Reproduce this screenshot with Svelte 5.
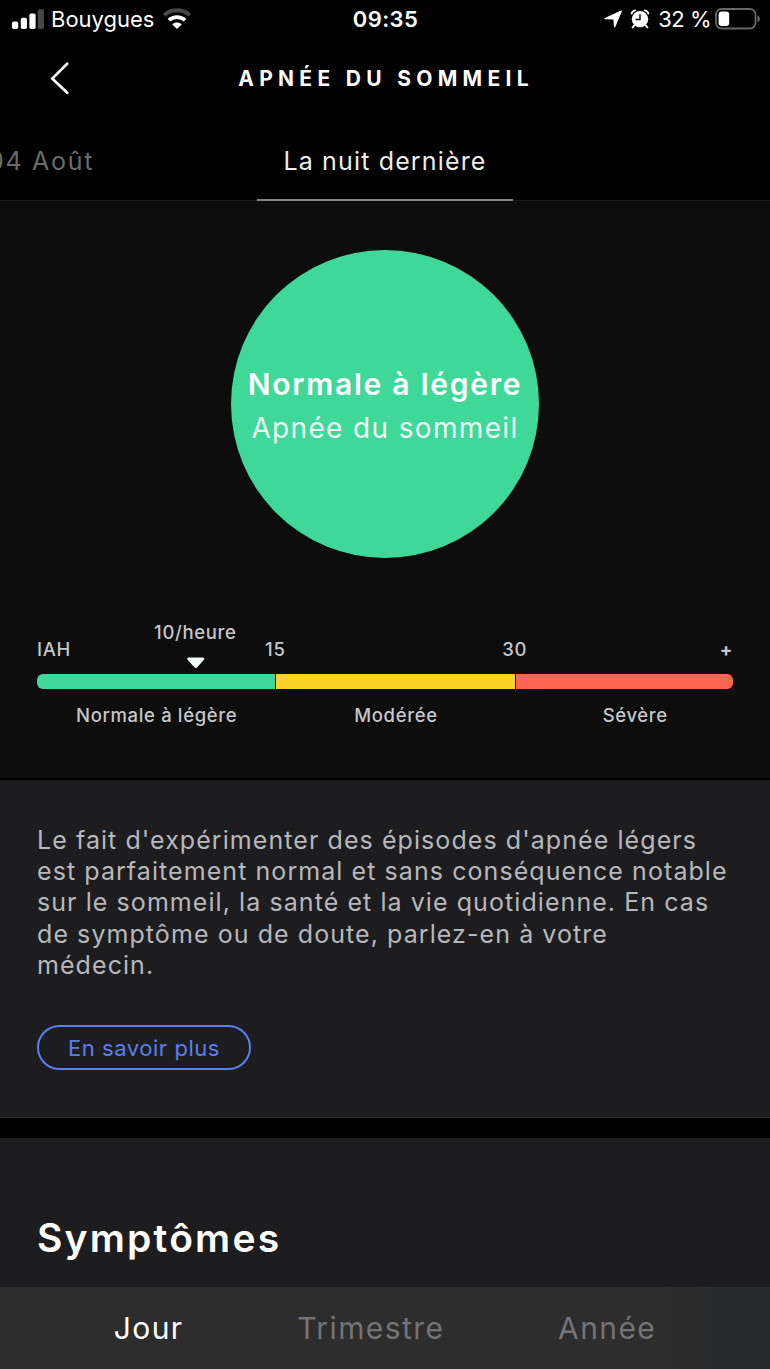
<script>
  // The last band is open ended, so the bar stops before a full third
  const BAND_WIDTH = 239.3
  const BAND_SPAN = 15

  let value = 10
  let activeTab = 'Jour'

  const bands = [
    { label: 'Normale à légère', color: '#40d898', width: 239.3 },
    { label: 'Modérée', color: '#fbd227', width: 239.3 },
    { label: 'Sévère', color: '#ff6552', width: 217.4 },
  ]
  const ticks = [15, 30]
  const tabs = ['Jour', 'Trimestre', 'Année']

  function toX(v) {
    return (v / BAND_SPAN) * BAND_WIDTH
  }
</script>

<div class="screen">
  <header class="status-bar">
    <div class="status-left">
      <svg width="32" height="22" viewBox="0 0 32 22">
        <rect x="0" y="13.5" width="6.2" height="7.5" rx="1.8" fill="#fff" />
        <rect x="8.8" y="9.8" width="6.2" height="11.2" rx="1.8" fill="#fff" />
        <rect x="17.4" y="5.5" width="6.2" height="15.5" rx="1.8" fill="#fff" />
        <rect x="25.8" y="1.2" width="6.2" height="19.8" rx="1.8" fill="#474747" />
      </svg>
      <span class="carrier">Bouygues</span>
      <svg class="wifi" width="30" height="22" viewBox="0 0 30 22">
        <path d="M2.3 7.3C9.4.7 20.6.7 27.7 7.3" fill="none" stroke="#474747" stroke-width="4" />
        <path d="M6.9 12.2C11.5 8 18.5 8 23.1 12.2" fill="none" stroke="#fff" stroke-width="3.8" />
        <path d="M10.3 16.4C13 14 17 14 19.7 16.4L15 21Z" fill="#fff" />
      </svg>
    </div>
    <span class="clock">09:35</span>
    <div class="status-right">
      <svg width="19" height="18" viewBox="0 0 19 18">
        <path d="M.8 8.1 16.5.7c.9-.4 1.5.1 1.2 1L11.4 16.8c-.4.9-1.4.7-1.5-.2L9.4 9.4 1 9.2C.1 9.1 0 8.5.8 8.1Z" fill="#fff" />
      </svg>
      <svg class="alarm" width="20" height="20" viewBox="0 0 20 20">
        <circle cx="10" cy="10.2" r="8.2" fill="#fff" />
        <path d="M1.6 4.6A4.6 4.6 0 0 1 5.2 1.4M18.4 4.6A4.6 4.6 0 0 0 14.8 1.4M4.4 16.4 2.6 18.4M15.6 16.4 17.4 18.4" fill="none" stroke="#fff" stroke-width="1.9" stroke-linecap="round" />
        <path d="M10 5.2V10.5H5.6" fill="none" stroke="#000" stroke-width="1.4" />
      </svg>
      <span class="percent">32 %</span>
      <svg class="battery" width="46" height="22" viewBox="0 0 46 22">
        <rect x="1" y="1" width="39.5" height="19.5" rx="5.5" fill="none" stroke="#686868" stroke-width="1.8" />
        <rect x="3.6" y="3.6" width="10.6" height="14.3" rx="3" fill="#fff" />
        <path d="M42.5 7.2C45.7 8.6 45.7 12.9 42.5 14.3Z" fill="#686868" />
      </svg>
    </div>
  </header>

  <nav class="nav-bar">
    <button class="back" aria-label="Retour">
      <svg width="20" height="32" viewBox="0 0 20 32">
        <path d="M17.2 1.8 2.2 16.6 17.2 30.8" fill="none" stroke="#fff" stroke-width="2.7" stroke-linecap="round" stroke-linejoin="round" />
      </svg>
    </button>
    <h1>APNÉE DU SOMMEIL</h1>
  </nav>

  <div class="nights">
    <span class="night previous">04 Août</span>
    <span class="night current">La nuit dernière</span>
  </div>

  <section class="result">
    <div class="circle">
      <strong>Normale à légère</strong>
      <span>Apnée du sommeil</span>
    </div>

    <div class="scale">
      <div class="marker" style="left: {toX(value) - 1.2}px">
        <span>{value}/heure</span>
        <svg width="18" height="12" viewBox="0 0 18 12">
          <path d="M2 .5H16C17.6.5 18 2 17 3L10.2 10.4Q9 11.6 7.8 10.4L1 3C0 2 .4.5 2 .5Z" fill="#f1fbf8" />
        </svg>
      </div>
      <div class="ticks">
        <span>IAH</span>
        {#each ticks as tick}
          <span class="tick" style="left: {toX(tick) - 1}px">{tick}</span>
        {/each}
        <span class="plus">+</span>
      </div>
      <div class="bar">
        {#each bands as band}
          <div class="band" style="background-color: {band.color}; width: {band.width}px"></div>
        {/each}
      </div>
      <div class="labels">
        {#each bands as band}
          <span style="width: {BAND_WIDTH}px">{band.label}</span>
        {/each}
      </div>
    </div>
  </section>

  <section class="info">
    <p>
      Le fait d'expérimenter des épisodes d'apnée légers<br />
      est parfaitement normal et sans conséquence notable<br />
      sur le sommeil, la santé et la vie quotidienne. En cas<br />
      de symptôme ou de doute, parlez-en à votre<br />
      médecin.
    </p>
    <button class="more">En savoir plus</button>
  </section>

  <section class="symptoms">
    <h2>Symptômes</h2>
  </section>

  <footer class="tabs">
    {#each tabs as tab}
      <button class="tab" class:active={tab === activeTab}>{tab}</button>
    {/each}
  </footer>
</div>

<style>
  :global(body) {
    margin: 0;
    background: #000;
  }
  .screen {
    display: flex;
    flex-direction: column;
    width: 770px;
    height: 1369px;
    overflow: hidden;
    background: #000;
    color: #fff;
    font-family: Inter, 'Open Sans', sans-serif;
  }
  button {
    padding: 0;
    border: none;
    background: none;
    color: inherit;
    font: inherit;
    cursor: pointer;
  }
  svg {
    display: block;
    flex-shrink: 0;
  }

  .status-bar {
    display: grid;
    grid-template-columns: 1fr auto 1fr;
    align-items: center;
    height: 38px;
    padding: 0 9px 0 12px;
    box-sizing: border-box;
    font-size: 22px;
  }
  .status-left,
  .status-right {
    display: flex;
    align-items: center;
  }
  .status-right {
    justify-content: flex-end;
  }
  .carrier {
    margin-left: 7px;
  }
  .wifi {
    margin-left: 8px;
  }
  .clock {
    margin-right: 2px;
    font-weight: 600;
    letter-spacing: 0.4px;
  }
  .alarm {
    margin-left: 7px;
  }
  .percent {
    margin: 0 4px 0 8px;
    letter-spacing: -0.5px;
  }

  .nav-bar {
    display: grid;
    grid-template-columns: 90px 1fr 90px;
    align-items: center;
    height: 79px;
  }
  .back {
    justify-self: start;
    margin-left: 50px;
  }
  h1 {
    margin: 2px 0 0;
    text-align: center;
    font-size: 21px;
    font-weight: 700;
    letter-spacing: 5.3px;
    text-indent: 2px;
  }

  .nights {
    display: grid;
    grid-template-columns: 257px 256px 1fr;
    height: 84px;
    box-sizing: border-box;
    border-bottom: 1px solid #1c1c1c;
    font-size: 25px;
    letter-spacing: 1.15px;
    line-height: 88px;
    white-space: nowrap;
  }
  .previous {
    margin-left: -12px;
    color: #6b6b6b;
    letter-spacing: 1.7px;
  }
  .current {
    height: 84px;
    box-sizing: border-box;
    border-bottom: 2px solid #838585;
    text-align: center;
    color: #ededed;
  }

  .result {
    display: flex;
    flex-direction: column;
    align-items: center;
    height: 577px;
    box-sizing: border-box;
    padding-top: 49px;
    background: #0d0d0d;
  }
  .circle {
    display: flex;
    flex-direction: column;
    align-items: center;
    justify-content: center;
    width: 308px;
    height: 308px;
    box-sizing: border-box;
    padding-top: 4px;
    border-radius: 50%;
    background: #40d898;
    white-space: nowrap;
  }
  .circle strong {
    font-size: 30px;
    font-weight: 600;
    line-height: 44px;
    letter-spacing: 1.75px;
  }
  .circle span {
    font-size: 28px;
    line-height: 44px;
    letter-spacing: 1.35px;
    color: #eefcf6;
  }

  .scale {
    position: relative;
    width: 696px;
    margin-top: 80px;
    font-size: 18.5px;
    font-weight: 500;
    line-height: 22px;
    letter-spacing: 0.65px;
    color: #c6c6cb;
  }
  .marker {
    position: absolute;
    top: -17px;
    display: flex;
    flex-direction: column;
    align-items: center;
    gap: 14px;
    transform: translateX(-50%);
  }
  .ticks {
    position: relative;
    display: flex;
    justify-content: space-between;
  }
  .tick {
    position: absolute;
    transform: translateX(-50%);
  }
  .plus {
    font-weight: 700;
  }
  .bar {
    display: flex;
    height: 15px;
    margin-top: 14px;
    border-radius: 6px;
    overflow: hidden;
  }
  .band {
    box-sizing: border-box;
    border-right: 1.5px solid #0d0d0d;
  }
  .band:last-child {
    border-right: none;
  }
  .labels {
    display: flex;
    margin-top: 15px;
  }
  .labels span {
    flex-shrink: 0;
    text-align: center;
  }

  .info {
    height: 338px;
    box-sizing: border-box;
    margin-top: 2px;
    padding: 45px 37px 0;
    border-bottom: 1px solid #2a2a2b;
    background: #1d1d1f;
  }
  p {
    margin: 0;
    font-size: 25px;
    line-height: 31.2px;
    letter-spacing: 1.07px;
    color: #b8b8bb;
    white-space: nowrap;
  }
  .more {
    width: 214px;
    height: 45px;
    margin-top: 44px;
    border: 2px solid #5a7ef2;
    border-radius: 23px;
    color: #5b7dec;
    font-size: 22px;
    letter-spacing: 0.55px;
  }

  .symptoms {
    height: 149px;
    box-sizing: border-box;
    margin-top: 20px;
    padding: 74px 37px 0;
    background: #1d1d1f;
  }
  h2 {
    margin: 0;
    font-size: 39px;
    font-weight: 600;
    line-height: 52px;
    letter-spacing: 2.2px;
  }

  .tabs {
    display: flex;
    align-items: center;
    justify-content: space-evenly;
    height: 82px;
    background: linear-gradient(90deg, #2d2d2d 86%, #28292a 94%);
  }
  .tab {
    color: #747476;
    font-size: 30px;
    letter-spacing: 1.4px;
  }
  .tab.active {
    color: #fff;
  }
</style>
